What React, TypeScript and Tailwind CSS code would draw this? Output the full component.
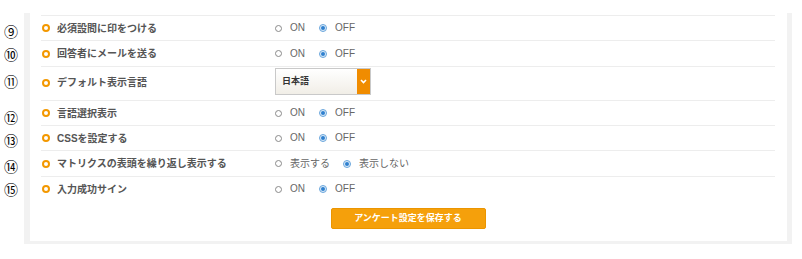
import React from "react";

type Row = {
  label: string;
  kind: "onoff" | "select" | "matrix";
  h: string;
};

const rows: Row[] = [
  { label: "必須設問に印をつける", kind: "onoff", h: "h-[25px]" },
  { label: "回答者にメールを送る", kind: "onoff", h: "h-[26px]" },
  { label: "デフォルト表示言語", kind: "select", h: "h-[34px]" },
  { label: "言語選択表示", kind: "onoff", h: "h-[25px]" },
  { label: "CSSを設定する", kind: "onoff", h: "h-[25px]" },
  { label: "マトリクスの表頭を繰り返し表示する", kind: "matrix", h: "h-[26px]" },
  { label: "入力成功サイン", kind: "onoff", h: "h-[25px]" },
];

// annotation numbers sit a bit off the rows in the original
const numbers = [
  { n: "⑨", mt: "mt-[11px]" },
  { n: "⑩", mt: "mt-[9px]" },
  { n: "⑪", mt: "mt-[13px]" },
  { n: "⑫", mt: "mt-[22px]" },
  { n: "⑬", mt: "mt-[9px]" },
  { n: "⑭", mt: "mt-[12px]" },
  { n: "⑮", mt: "mt-[9px]" },
];

function Radio({ checked, text }: { checked: boolean; text: string }) {
  return (
    <div className="flex items-center">
      {checked ? (
        <span className="flex h-[8px] w-[8px] items-center justify-center rounded-full border border-[#6aa6dc] bg-[#dcebf8]">
          <span className="h-[4px] w-[4px] rounded-full bg-[#2f80cf]" />
        </span>
      ) : (
        <span className="h-[7px] w-[7px] rounded-full border border-[#8a8a8a] bg-white" />
      )}
      <span className="ml-[8px] text-[10px] leading-none text-[#666]">{text}</span>
    </div>
  );
}

function Control({ kind }: { kind: Row["kind"] }) {
  if (kind === "select") {
    return (
      <div className="flex h-[27px] w-[96px] items-stretch border border-[#c9c9c9] bg-gradient-to-b from-white to-[#f1eee7]">
        <span className="flex flex-1 items-center pl-[6px] text-[9px] font-bold text-[#333]">
          日本語
        </span>
        <span className="flex w-[13px] items-center justify-center bg-[#f08c00]">
          <svg width="7" height="5" viewBox="0 0 7 5" fill="none">
            <path d="M1 1l2.5 2.5L6 1" stroke="white" strokeWidth="1.6" />
          </svg>
        </span>
      </div>
    );
  }
  if (kind === "matrix") {
    return (
      <div className="flex items-center gap-[13px]">
        <Radio checked={false} text="表示する" />
        <Radio checked text="表示しない" />
      </div>
    );
  }
  return (
    <div className="flex items-center gap-[14px]">
      <Radio checked={false} text="ON" />
      <Radio checked text="OFF" />
    </div>
  );
}

export default function App() {
  return (
    <div
      className="h-[259px] w-[802px] bg-white"
      style={{ fontFamily: '"Liberation Sans", "Noto Sans CJK JP", sans-serif' }}
    >
      <div className="flex pt-[13px]">
        <div className="flex w-[24px] flex-col items-center">
          {numbers.map((x) => (
            <span
              key={x.n}
              className={`${x.mt} h-[14px] pr-[2px] text-[14px] leading-[14px] text-black`}
              style={{ fontFamily: '"Noto Sans CJK JP", sans-serif' }}
            >
              {x.n}
            </span>
          ))}
        </div>
        <div className="w-[768px] bg-[#f2f2f2] pb-[3px] pl-[6px] pr-[5px]">
          <div className="bg-white pb-[12px] pl-[11px] pr-[12px] pt-[2px]">
            {rows.map((r) => (
              <div
                key={r.label}
                className={`flex ${r.h} border-t border-[#ededed] ${
                  r.kind === "select" ? "items-start pt-[1px]" : "items-center"
                }`}
              >
                <div
                  className={`flex w-[234px] items-center ${
                    r.kind === "select" ? "h-[29px]" : ""
                  }`}
                >
                  <span className="ml-[1px] h-[8px] w-[8px] rounded-full border-2 border-[#f39800]" />
                  <span className="ml-[7px] text-[10px] font-bold text-[#555]">{r.label}</span>
                </div>
                <Control kind={r.kind} />
              </div>
            ))}
            <div className="mt-[7px] flex justify-center">
              <button className="flex h-[21px] w-[155px] items-center justify-center rounded-[2px] border border-[#eb9500] bg-[#f5a00b] text-[9px] font-bold text-white">
                アンケート設定を保存する
              </button>
            </div>
          </div>
        </div>
      </div>
    </div>
  );
}
